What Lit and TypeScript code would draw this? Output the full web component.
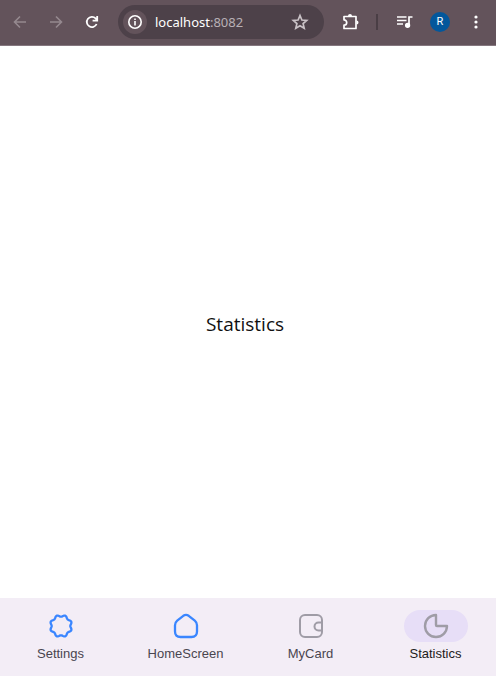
import { LitElement, html, css, svg } from "lit";
import { customElement, state } from "lit/decorators.js";

const lobes = 8;
function gearPath(): string {
  const points: string[] = [];
  for (let i = 0; i <= 96; i++) {
    const a = (i / 96) * Math.PI * 2;
    const r = 10.2 + 0.9 * Math.cos(lobes * (a - Math.PI / lobes));
    points.push(`${(13 + r * Math.cos(a)).toFixed(2)} ${(13 + r * Math.sin(a)).toFixed(2)}`);
  }
  return `M${points.join("L")}Z`;
}

const tabs = [
  { name: "Settings", tone: "blue", icon: svg`<path d=${gearPath()} />` },
  {
    name: "HomeScreen",
    tone: "blue",
    icon: svg`<path d="M10.3 2.8Q13 1 15.7 2.8L21.8 7.6Q24 9.4 24 12.3V18.5Q24 24 18.5 24H7.5Q2 24 2 18.5V12.3Q2 9.4 4.2 7.6Z" />`,
  },
  {
    name: "MyCard",
    tone: "grey",
    icon: svg`<rect x="2" y="2" width="22" height="22" rx="5" /><path d="M24 9.5H20.5A4 4 0 0 0 20.5 17.5H24" />`,
  },
  {
    name: "Statistics",
    tone: "grey",
    icon: svg`<path class="pie" d="M13 2A11 11 0 1 0 24 13H14Q13 13 13 12Z" />`,
  },
];

@customElement("browser-toolbar")
export class BrowserToolbar extends LitElement {
  static styles = css`
    :host {
      display: block;
    }
    .bar {
      display: flex;
      align-items: center;
      height: 44px;
      padding: 0 8px 1px;
      background: #63535b;
      border-bottom: 1px solid #85777f;
    }
    button {
      display: flex;
      align-items: center;
      justify-content: center;
      flex: none;
      width: 24px;
      height: 28px;
      padding: 0;
      border: 0;
      border-radius: 14px;
      background: none;
      color: #fff;
    }
    .nav {
      display: flex;
      gap: 12px;
    }
    .off {
      color: #95898f;
    }
    .address {
      display: flex;
      align-items: center;
      flex: 1;
      min-width: 0;
      height: 34px;
      box-sizing: border-box;
      margin-left: 14px;
      padding: 0 12px 0 5px;
      border-radius: 17px;
      background: #4d4149;
    }
    .info {
      background: #63535b;
      width: 24px;
      height: 24px;
    }
    .url {
      flex: 1;
      min-width: 0;
      margin-left: 8px;
      font: 13px/20px "Noto Sans", "Open Sans", sans-serif;
      color: #fff;
      white-space: nowrap;
    }
    .port {
      color: #b8b0b5;
    }
    .star {
      color: #c9c2c6;
    }
    .tools {
      display: flex;
      align-items: center;
      margin-left: 14px;
    }
    .rule {
      width: 2px;
      height: 16px;
      margin: 0 14px;
      background: #4a3e45;
    }
    .avatar {
      width: 20px;
      height: 20px;
      margin: 0 14px;
      background: #03579b;
      font: 11px/20px Roboto, sans-serif;
    }
    svg {
      display: block;
      fill: none;
      stroke: currentColor;
    }
  `;

  render() {
    return html`
      <header class="bar">
        <div class="nav">
          <button class="off" aria-label="Back">
            <svg width="16" height="16" viewBox="0 0 16 16" stroke-width="1.6"><path d="M14 8H3M8 2.5L2.5 8L8 13.5" /></svg>
          </button>
          <button class="off" aria-label="Forward">
            <svg width="16" height="16" viewBox="0 0 16 16" stroke-width="1.6"><path d="M2 8H13M8 2.5L13.5 8L8 13.5" /></svg>
          </button>
          <button aria-label="Reload">
            <svg width="16" height="16" viewBox="0 0 16 16" stroke-width="1.8"><path d="M12.6 10A5.1 5.1 0 1 1 11.6 4.4L13 6M13.2 2V6.6H8.6" /></svg>
          </button>
        </div>
        <div class="address">
          <button class="info" aria-label="Site information">
            <svg width="16" height="16" viewBox="0 0 16 16" stroke-width="1.6"><circle cx="8" cy="8" r="6.2" /><path d="M8 7V11.5M8 4.5V6" /></svg>
          </button>
          <span class="url">localhost<span class="port">:8082</span></span>
          <button class="star" aria-label="Bookmark this page">
            <svg width="18" height="18" viewBox="0 0 18 18" stroke-width="1.7"><path d="M9 2.5L10.9 7L15.7 7.4L12.1 10.6L13.2 15.3L9 12.8L4.8 15.3L5.9 10.6L2.3 7.4L7.1 7Z" /></svg>
          </button>
        </div>
        <div class="tools">
          <button aria-label="Extensions">
            <svg width="18" height="18" viewBox="0 0 18 18"><path stroke-width="1.7" stroke-linejoin="round" d="M3 3.5H15V15.5H3V12.2A2.6 2.6 0 0 0 3 6.8Z" /><path fill="currentColor" stroke="none" d="M7 3A2 2 0 0 1 11 3ZM15.5 7.5A2 2 0 0 1 15.5 11.5Z" /></svg>
          </button>
          <span class="rule"></span>
          <button aria-label="Media controls">
            <svg width="18" height="16" viewBox="0 0 18 16" stroke-width="1.7"><path d="M2 3H11.5M2 6.5H11.5M2 10H8M14 11V3H17.5" /><circle cx="12.6" cy="11.3" r="1.8" fill="currentColor" /></svg>
          </button>
          <button class="avatar" aria-label="Profile">R</button>
          <button aria-label="Menu">
            <svg width="16" height="16" viewBox="0 0 16 16"><g fill="currentColor" stroke="none"><circle cx="8" cy="3" r="1.6" /><circle cx="8" cy="8" r="1.6" /><circle cx="8" cy="13" r="1.6" /></g></svg>
          </button>
        </div>
      </header>
    `;
  }
}

@customElement("tab-bar")
export class TabBar extends LitElement {
  @state() private current = "Statistics";

  static styles = css`
    :host {
      display: block;
    }
    .tabs {
      display: grid;
      grid-template-columns: repeat(4, 1fr);
      margin: 0 -2px;
      padding: 12px 0 14px;
      background: #f3edf6;
    }
    .tab {
      display: flex;
      flex-direction: column;
      align-items: center;
      gap: 4px;
      padding: 0;
      border: 0;
      background: none;
      color: #49454f;
      font: 13px/16px "Liberation Sans", Arial, sans-serif;
    }
    .pill {
      display: flex;
      align-items: center;
      justify-content: center;
      width: 64px;
      height: 32px;
      border-radius: 16px;
    }
    .active {
      color: #1d1b20;
    }
    .active .pill {
      background: #e7def7;
    }
    svg {
      fill: none;
      stroke-width: 2.3;
      stroke-linejoin: round;
    }
    .blue {
      stroke: #3a86ff;
    }
    .grey {
      stroke: #9f9ca6;
      stroke-width: 2;
    }
    .pie {
      stroke-width: 2.4;
    }
  `;

  render() {
    return html`
      <nav class="tabs">
        ${tabs.map(
          (t) => html`
            <button class="tab ${t.name === this.current ? "active" : ""}" @click=${() => (this.current = t.name)}>
              <span class="pill"><svg class=${t.tone} width="26" height="26" viewBox="0 0 26 26">${t.icon}</svg></span>
              <span>${t.name}</span>
            </button>
          `,
        )}
      </nav>
    `;
  }
}

@customElement("app-root")
export class AppRoot extends LitElement {
  static styles = css`
    :host {
      display: flex;
      flex-direction: column;
      min-height: 100vh;
      overflow: hidden;
      background: #fff;
    }
    .screen {
      display: flex;
      flex: 1;
      align-items: center;
      justify-content: center;
      padding: 4px 6px 0 0;
    }
    .title {
      margin: 0;
      font: 19px/28px "Open Sans", "Noto Sans", sans-serif;
      color: #111;
    }
  `;

  render() {
    return html`
      <browser-toolbar></browser-toolbar>
      <main class="screen"><h1 class="title">Statistics</h1></main>
      <tab-bar></tab-bar>
    `;
  }
}
